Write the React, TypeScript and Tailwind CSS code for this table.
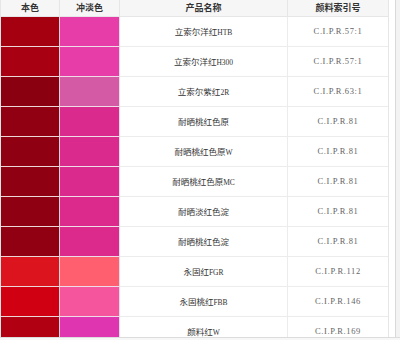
import React from "react";

const rows = [
  { a: "#a50010", b: "#e63da8", name: "立索尔洋红", suf: "HTB", idx: "C.I.P.R.57:1" },
  { a: "#a80012", b: "#e63da8", name: "立索尔洋红", suf: "H300", idx: "C.I.P.R.57:1" },
  { a: "#8b0010", b: "#d45aa5", name: "立索尔紫红", suf: "2R", idx: "C.I.P.R.63:1" },
  { a: "#900012", b: "#db2a8e", name: "耐晒桃红色原", suf: "", idx: "C.I.P.R.81" },
  { a: "#8e0012", b: "#db2a8e", name: "耐晒桃红色原", suf: "W", idx: "C.I.P.R.81" },
  { a: "#8e0012", b: "#db2a8e", name: "耐晒桃红色原", suf: "MC", idx: "C.I.P.R.81" },
  { a: "#8e0012", b: "#dc2a8c", name: "耐晒淡红色淀", suf: "", idx: "C.I.P.R.81" },
  { a: "#900012", b: "#dc2a8c", name: "耐晒桃红色淀", suf: "", idx: "C.I.P.R.81" },
  { a: "#dc141e", b: "#ff5f6e", name: "永固红", suf: "FGR", idx: "C.I.P.R.112" },
  { a: "#d00012", b: "#f5559c", name: "永固桃红", suf: "FBB", idx: "C.I.P.R.146" },
  { a: "#b10012", b: "#e035b0", name: "颜料红", suf: "W", idx: "C.I.P.R.169" },
];

const cjk = { fontFamily: '"Noto Sans CJK SC", "Noto Sans", sans-serif' };
const serif = { fontFamily: '"Liberation Serif", serif' };

export default function App() {
  return (
    <div className="w-[400px] h-[340px] overflow-hidden bg-white flex flex-col">
      <div className="flex h-[337px] overflow-hidden">
        <div className="w-[389px] flex flex-col border-l border-r border-[#e6e6e6] overflow-hidden">
          <div
            className="grid grid-cols-[59px_60px_168px_100px] h-[17px] shrink-0 bg-[#f6f6f6] text-[9px] font-bold text-[#333]"
            style={cjk}
          >
            <div className="flex items-center justify-center border-r border-b border-[#e6e6e6]">本色</div>
            <div className="flex items-center justify-center border-r border-b border-[#e6e6e6]">冲淡色</div>
            <div className="flex items-center justify-center border-r border-b border-[#e6e6e6]">产品名称</div>
            <div className="flex items-center justify-center border-b border-[#e6e6e6]">颜料索引号</div>
          </div>
          {rows.map((r, i) => (
            <div key={i} className="grid grid-cols-[59px_60px_168px_100px] h-[30px] shrink-0">
              <div className="border-r border-b border-[#ecd6d6]" style={{ backgroundColor: r.a }} />
              <div className="border-r border-b border-[#f0dce6]" style={{ backgroundColor: r.b }} />
              <div
                className="flex items-center justify-center border-r border-b border-[#ececec] text-[8.5px] text-[#333]"
                style={cjk}
              >
                <span>
                  {r.name}
                  {r.suf && (
                    <span className="text-[7.5px]" style={serif}>
                      {r.suf}
                    </span>
                  )}
                </span>
              </div>
              <div
                className="flex items-center justify-center border-b border-[#ececec] text-[8.5px] text-[#666] tracking-[0.6px]"
                style={serif}
              >
                {r.idx}
              </div>
            </div>
          ))}
        </div>
        <div className="w-[6px] bg-white" />
        <div className="w-[1px] bg-[#d9d9d9]" />
        <div className="flex-1 bg-[#f3f3f3]" />
      </div>
      <div className="h-[1px] bg-[#dcdcdc]" />
      <div className="flex-1 bg-[#f7f7f7]" />
    </div>
  );
}
